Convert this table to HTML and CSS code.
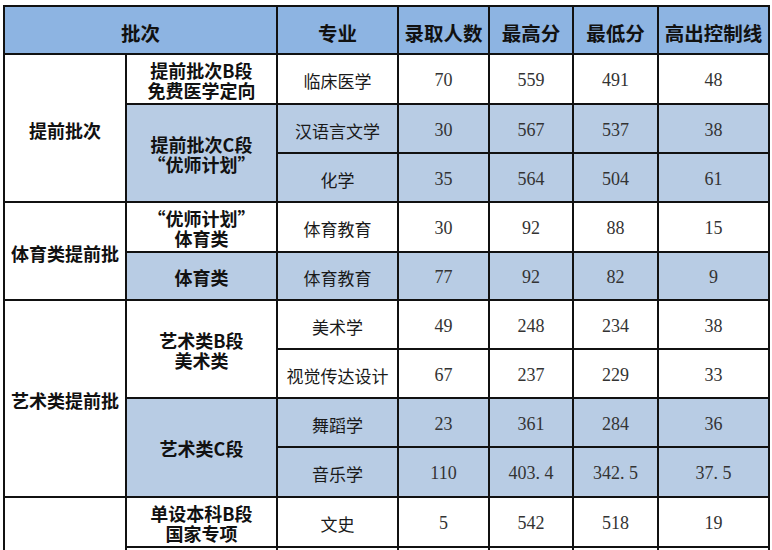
FILE: index.html
```html
<!DOCTYPE html>
<html lang="zh">
<head>
<meta charset="utf-8">
<title>录取统计</title>
<link rel="stylesheet" href="styles.css">
</head>
<body>
<div class="sheet">
  <div class="c hd span2">批次</div>
  <div class="c hd">专业</div>
  <div class="c hd">录取人数</div>
  <div class="c hd">最高分</div>
  <div class="c hd">最低分</div>
  <div class="c hd">高出控制线</div>

  <div class="c b1 r1-3">提前批次</div>
  <div class="c b2">提前批次B段<br>免费医学定向</div>
  <div class="c m">临床医学</div>
  <div class="c n">70</div><div class="c n">559</div><div class="c n">491</div><div class="c n">48</div>

  <div class="c b2 lt rs2">提前批次C段<br>“优师计划”</div>
  <div class="c m lt">汉语言文学</div>
  <div class="c n lt">30</div><div class="c n lt">567</div><div class="c n lt">537</div><div class="c n lt">38</div>

  <div class="c m lt">化学</div>
  <div class="c n lt">35</div><div class="c n lt">564</div><div class="c n lt">504</div><div class="c n lt">61</div>

  <div class="c b1 rs2">体育类提前批</div>
  <div class="c b2">“优师计划”<br>体育类</div>
  <div class="c m">体育教育</div>
  <div class="c n">30</div><div class="c n">92</div><div class="c n">88</div><div class="c n">15</div>

  <div class="c b2 lt">体育类</div>
  <div class="c m lt">体育教育</div>
  <div class="c n lt">77</div><div class="c n lt">92</div><div class="c n lt">82</div><div class="c n lt">9</div>

  <div class="c b1 rs4">艺术类提前批</div>
  <div class="c b2 rs2">艺术类B段<br>美术类</div>
  <div class="c m">美术学</div>
  <div class="c n">49</div><div class="c n">248</div><div class="c n">234</div><div class="c n">38</div>

  <div class="c m">视觉传达设计</div>
  <div class="c n">67</div><div class="c n">237</div><div class="c n">229</div><div class="c n">33</div>

  <div class="c b2 lt rs2">艺术类C段</div>
  <div class="c m lt">舞蹈学</div>
  <div class="c n lt">23</div><div class="c n lt">361</div><div class="c n lt">284</div><div class="c n lt">36</div>

  <div class="c m lt">音乐学</div>
  <div class="c n lt">110</div><div class="c n lt">403<span class="pt">.</span>4</div><div class="c n lt">342<span class="pt">.</span>5</div><div class="c n lt">37<span class="pt">.</span>5</div>

  <div class="c b1 rs2"></div>
  <div class="c b2">单设本科B段<br>国家专项</div>
  <div class="c m">文史</div>
  <div class="c n">5</div><div class="c n">542</div><div class="c n">518</div><div class="c n">19</div>

  <div class="c b2"></div>
  <div class="c m"></div>
  <div class="c n"></div><div class="c n"></div><div class="c n"></div><div class="c n"></div>
</div>
</body>
</html>
```

FILE: styles.css
```css
html, body {
  margin: 0;
  padding: 0;
  background: #ffffff;
  height: 550px;
  overflow: hidden;
}

body {
  padding: 5px 0 0 3px;
  box-sizing: border-box;
  font-family: "Noto Sans CJK SC", "Noto Sans", sans-serif;
  color: #111111;
}

.sheet {
  display: grid;
  grid-template-columns: 122px 151px 121px 91px 84px 85px 111px;
  grid-template-rows: 48px 50px 49px 49px 50px 48px 49px 49px 49px 50px 50px 40px;
  border-top: 2px solid #111111;
  border-left: 2px solid #111111;
  width: max-content;
}

.c {
  box-sizing: border-box;
  border-right: 2px solid #111111;
  border-bottom: 2px solid #111111;
  padding-top: 3px;
  display: flex;
  align-items: center;
  justify-content: center;
  text-align: center;
  background: #ffffff;
}

.hd {
  background: #8db4e2;
  font-weight: 700;
  font-size: 19.5px;
  padding-top: 4px;
}

.span2 {
  grid-column: span 2;
}

.b1 {
  font-weight: 700;
  font-size: 18px;
}

.b2 {
  font-weight: 700;
  font-size: 18px;
  line-height: 20px;
  padding-top: 1px;
}

.m {
  font-size: 17px;
  color: #1a1a1a;
}

.n {
  font-family: "Liberation Serif", "DejaVu Serif", serif;
  font-size: 18px;
  color: #333333;
}

.pt {
  display: inline-block;
  width: 0.5em;
  text-align: left;
}

.lt {
  background: #b8cce4;
}

.rs2 {
  grid-row: span 2;
}

.r1-3 {
  grid-row: span 3;
}

.rs4 {
  grid-row: span 4;
}
```
